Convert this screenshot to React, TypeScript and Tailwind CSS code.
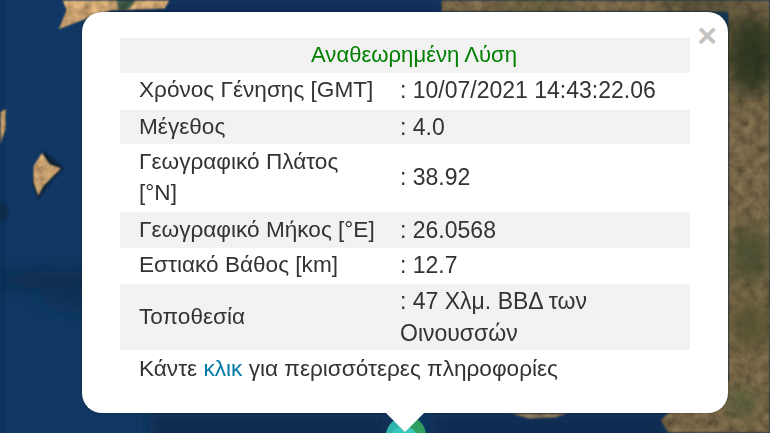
const rows = [
    {label: "Χρόνος Γένησης [GMT]", value: ": 10/07/2021 14:43:22.06", h: "h-[37px]", shade: false, tune: "pb-[3px]"},
    {label: "Μέγεθος", value: ": 4.0", h: "h-[34px]", shade: true, tune: "pb-[1px]"},
    {label: "Γεωγραφικό Πλάτος [°N]", value: ": 38.92", h: "h-[68px]", shade: false, tune: "pb-[2px] leading-[31px]"},
    {label: "Γεωγραφικό Μήκος [°E]", value: ": 26.0568", h: "h-[36px]", shade: true, tune: "pb-[1px]"},
    {label: "Εστιακό Βάθος [km]", value: ": 12.7", h: "h-[36px]", shade: false, tune: "pb-[2px]"},
    {label: "Τοποθεσία", value: ": 47 Χλμ. ΒΒΔ των Οινουσσών", h: "h-[66px]", shade: true, tune: ""},
]

function MapBackground() {
    return (
        <svg className="absolute inset-0" width="770" height="433" viewBox="0 0 770 433">
            <defs>
                <filter id="land" x="-5%" y="-5%" width="110%" height="110%">
                    <feTurbulence type="fractalNoise" baseFrequency="0.11" numOctaves="4" seed="7" result="n"/>
                    <feColorMatrix in="n" type="matrix" values="0.6 0.6 0 0 0.1  0.6 0.6 0 0 0.1  0.6 0.6 0 0 0.1  0 0 0 0 1" result="g"/>
                    <feGaussianBlur in="SourceGraphic" stdDeviation="1" result="soft"/>
                    <feComposite in="g" in2="soft" operator="arithmetic" k1="1.25" k2="0" k3="0" k4="0" result="tex"/>
                    <feComposite in="tex" in2="soft" operator="in"/>
                </filter>
                <filter id="patch" x="-30%" y="-30%" width="160%" height="160%">
                    <feGaussianBlur stdDeviation="10"/>
                </filter>
                <filter id="soft" x="-30%" y="-30%" width="160%" height="160%">
                    <feGaussianBlur stdDeviation="1.2"/>
                </filter>
                <filter id="band" x="-20%" y="-50%" width="140%" height="200%">
                    <feGaussianBlur stdDeviation="9"/>
                </filter>
            </defs>
            <rect width="770" height="433" fill="#113864"/>
            <g filter="url(#band)">
                <rect x="90" y="0" width="350" height="30" fill="#0d2c55"/>
                <ellipse cx="60" cy="280" rx="70" ry="9" fill="#0d2a4a"/>
                <ellipse cx="90" cy="300" rx="50" ry="14" fill="#0f3058"/>
                <rect x="430" y="414" width="240" height="30" fill="#0e2c50"/>
                <rect x="150" y="414" width="240" height="30" fill="#0e2b4c"/>
            </g>
            <rect width="6" height="433" fill="#0b2c55" opacity="0.5"/>
            <ellipse cx="3" cy="212" rx="5" ry="10" fill="#0d2a4a" filter="url(#soft)"/>
            <g filter="url(#soft)" fill="#0a2036">
                <path d="M44 151 L64 168 L50 183 L38 199 L32 182 Z"/>
            </g>
            <g filter="url(#land)">
                <path d="M58 30 L66 10 L62 0 L170 0 L165 9 L110 11 L84 20 Z" fill="#d4aa76"/>
                <path d="M116 0 L136 0 L130 9 L118 11 Z" fill="#3f5a48"/>
                <path d="M0 112 L6 108 L6 130 L0 146 Z" fill="#d4aa76"/>
                <path d="M42 152 L50 164 L62 168 L52 178 L44 186 L38 197 L33 182 L33 166 Z" fill="#d4aa76"/>
                <path d="M441 12 L441 0 L770 0 L770 433 L668 433 L660 420 L668 413 L728 380 L728 12 Z" fill="#7d6a4b"/>
                <path d="M508 413 L570 413 L556 418 L528 419 Z" fill="#8d7c5c"/>
            </g>
            <g filter="url(#patch)" opacity="0.8">
                <ellipse cx="752" cy="55" rx="26" ry="42" fill="#1f2a14"/>
                <ellipse cx="700" cy="5" rx="40" ry="7" fill="#2a3520"/>
                <ellipse cx="540" cy="6" rx="40" ry="6" fill="#4a5030"/>
                <ellipse cx="750" cy="255" rx="20" ry="30" fill="#3f4a2a"/>
                <ellipse cx="750" cy="325" rx="22" ry="24" fill="#50502f"/>
                <ellipse cx="741" cy="402" rx="12" ry="12" fill="#35562e"/>
            </g>
            <path d="M386 433 A22 22 0 0 1 404 416 L404 433 Z" fill="#2fb5ad"/>
            <path d="M426 433 A24 24 0 0 0 404 414 L404 433 Z" fill="#2f9e5f"/>
            <path d="M392 433 A14 14 0 0 1 416 433 Z" fill="#39c6bd"/>
        </svg>
    )
}

function App() {
    return (
        <div className="relative w-[770px] h-[433px] overflow-hidden bg-[#113864] font-['Liberation_Sans',Arial,sans-serif] text-[22.6px] leading-[32px] text-[#333333]">
            <MapBackground/>
            <div className="absolute left-[82px] top-[12px] flex flex-col items-center">
                <div className="relative w-[646px] h-[401px] rounded-[20px] bg-white pt-[26px] px-[38px] shadow-[0_0_3px_rgba(0,0,0,0.4)]">
                    <div className="blur-[0.3px]">
                        <div className="h-[35px] flex items-center justify-center pl-[18px] pb-[2px] bg-[#f2f2f2] text-[#008000] text-[22.1px]">Αναθεωρημένη Λύση</div>
                        {rows.map((r) => (
                            <div key={r.label} className={`flex items-center ${r.h} ${r.tune} ${r.shade ? "bg-[#f2f2f2]" : "bg-white"}`}>
                                <div className="w-[280px] pl-[19px] pr-[20px] shrink-0">{r.label}</div>
                                <div className="flex-1 pr-[30px] text-[23px]">{r.value}</div>
                            </div>
                        ))}
                        <div className="pl-[19px] pt-[3px]">Κάντε <span className="text-[#0078a8]">κλικ</span> για περισσότερες πληροφορίες</div>
                    </div>
                    <div className="absolute right-[11px] top-[4px] font-bold text-[34px] leading-[38px] text-[#c3c3c3]">×</div>
                </div>
                <div className="relative -mt-[3px] w-0 h-0 border-l-[22px] border-r-[22px] border-t-[22px] border-l-transparent border-r-transparent border-t-white"></div>
            </div>
        </div>
    );
}

export default App;
